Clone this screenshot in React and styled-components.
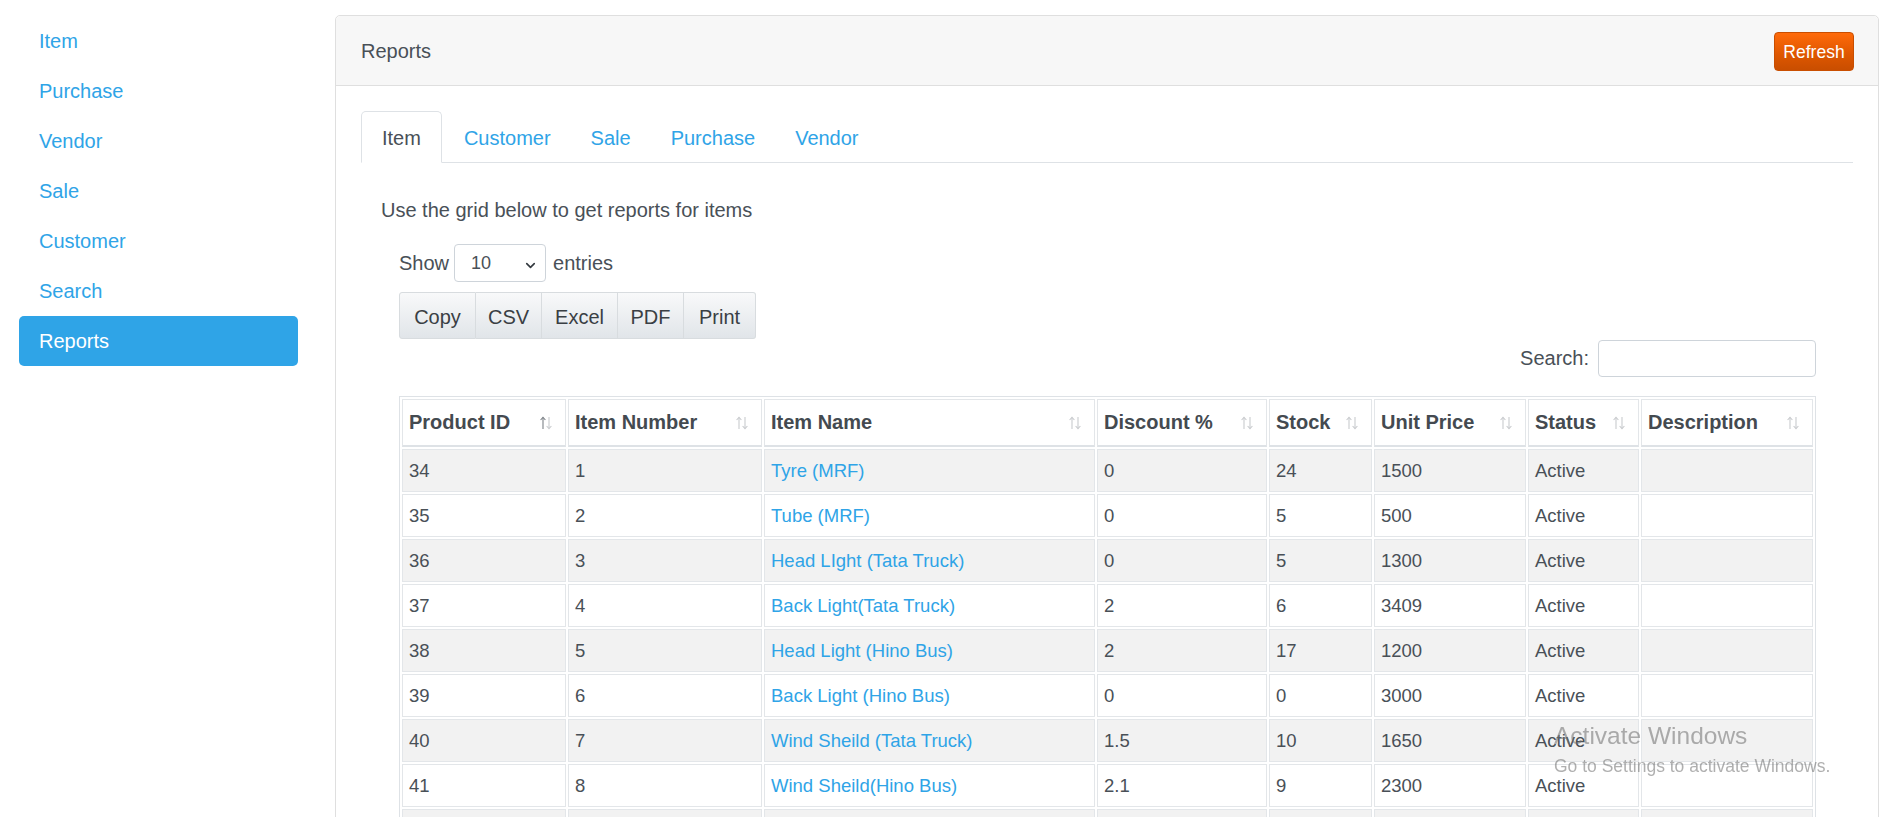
import React from 'react';
import styled, { createGlobalStyle } from 'styled-components';
import { ChevronDown } from 'lucide-react';

const GlobalStyle = createGlobalStyle`
* { box-sizing: border-box; }
body {
    margin: 0;
    background: #fff;
    font-family: "Liberation Sans", Arial, sans-serif;
    font-size: 20px;
    color: #495057;
}
`;

const sideLinks = ['Item', 'Purchase', 'Vendor', 'Sale', 'Customer', 'Search', 'Reports'];
const tabs = ['Item', 'Customer', 'Sale', 'Purchase', 'Vendor'];
const exportButtons = [
    { label: 'Copy', w: 77 },
    { label: 'CSV', w: 66 },
    { label: 'Excel', w: 76 },
    { label: 'PDF', w: 66 },
    { label: 'Print', w: 72 },
];
const columns = [
    { label: 'Product ID', w: 164, sorted: true },
    { label: 'Item Number', w: 194 },
    { label: 'Item Name', w: 331 },
    { label: 'Discount %', w: 170 },
    { label: 'Stock', w: 103 },
    { label: 'Unit Price', w: 152 },
    { label: 'Status', w: 111 },
    { label: 'Description' },
];
const rows = [
    [34, 1, 'Tyre (MRF)', '0', 24, 1500],
    [35, 2, 'Tube (MRF)', '0', 5, 500],
    [36, 3, 'Head LIght (Tata Truck)', '0', 5, 1300],
    [37, 4, 'Back Light(Tata Truck)', '2', 6, 3409],
    [38, 5, 'Head Light (Hino Bus)', '2', 17, 1200],
    [39, 6, 'Back Light (Hino Bus)', '0', 0, 3000],
    [40, 7, 'Wind Sheild (Tata Truck)', '1.5', 10, 1650],
    [41, 8, 'Wind Sheild(Hino Bus)', '2.1', 9, 2300],
    [42, 9, 'Side Mirror (Tata Truck)', '0', 12, 800],
    [43, 10, 'Side Mirror (Hino Bus)', '0', 8, 950],
];

function SortIcon({ active }) {
    return (
        <svg width="14" height="14" viewBox="0 0 14 14" fill="none" strokeWidth="1.1">
            <g stroke={active ? '#7d8288' : '#c9cbce'}>
                <path d="M4 13V1.5" />
                <path d="M1.6 4L4 1.4L6.4 4" />
            </g>
            <g stroke="#c9cbce">
                <path d="M10 1v11.5" />
                <path d="M7.6 10L10 12.6L12.4 10" />
            </g>
        </svg>
    );
}

function App() {
    return (
        <Page>
            <GlobalStyle />
            <Sidebar>
                {sideLinks.map((l) => (
                    <SideLink key={l} $active={l === 'Reports'}>{l}</SideLink>
                ))}
            </Sidebar>
            <Card>
                <CardHeader>
                    <HeaderTitle>Reports</HeaderTitle>
                    <RefreshButton>Refresh</RefreshButton>
                </CardHeader>
                <CardBody>
                    <TabNav>
                        {tabs.map((t) => (
                            <Tab key={t} $active={t === 'Item'}>{t}</Tab>
                        ))}
                    </TabNav>
                    <Intro>Use the grid below to get reports for items</Intro>
                    <GridWrapper>
                        <LengthRow>
                            Show
                            <SelectBox>
                                <Select defaultValue="10">
                                    <option>10</option>
                                    <option>25</option>
                                    <option>50</option>
                                    <option>100</option>
                                </Select>
                                <ChevronSlot><ChevronDown size={15} strokeWidth={2.6} /></ChevronSlot>
                            </SelectBox>
                            entries
                        </LengthRow>
                        <ButtonGroup>
                            {exportButtons.map((b) => (
                                <ExportButton key={b.label} $w={b.w}>{b.label}</ExportButton>
                            ))}
                        </ButtonGroup>
                        <SearchRow>
                            Search:
                            <SearchInput type="search" />
                        </SearchRow>
                        <Table>
                            <thead>
                                <tr>
                                    {columns.map((c) => (
                                        <Th key={c.label} $w={c.w}>
                                            <ThInner>
                                                {c.label}
                                                <SortIcon active={c.sorted} />
                                            </ThInner>
                                        </Th>
                                    ))}
                                </tr>
                            </thead>
                            <tbody>
                                {rows.map((r, i) => (
                                    <Row key={r[0]} $striped={i % 2 === 0}>
                                        <Td>{r[0]}</Td>
                                        <Td>{r[1]}</Td>
                                        <Td><ItemLink>{r[2]}</ItemLink></Td>
                                        <Td>{r[3]}</Td>
                                        <Td>{r[4]}</Td>
                                        <Td>{r[5]}</Td>
                                        <Td>Active</Td>
                                        <Td></Td>
                                    </Row>
                                ))}
                            </tbody>
                        </Table>
                    </GridWrapper>
                </CardBody>
            </Card>
            <Watermark>
                <WatermarkTitle>Activate Windows</WatermarkTitle>
                <WatermarkText>Go to Settings to activate Windows.</WatermarkText>
            </Watermark>
        </Page>
    );
}

export default App;

const Page = styled.div`
display: grid;
grid-template-columns: 335px 1fr;
align-items: start;
padding: 15px 10px 0 0;
`;

const Sidebar = styled.nav`
display: flex;
flex-direction: column;
padding: 1px 37px 0 19px;
`;

const SideLink = styled.a`
display: block;
padding: 10px 20px;
line-height: 30px;
font-size: 20px;
border-radius: 5px;
color: ${(p) => (p.$active ? '#fff' : '#2fa4e7')};
background: ${(p) => (p.$active ? '#2fa4e7' : 'transparent')};
cursor: pointer;
`;

const Card = styled.div`
border: 1px solid #dfdfdf;
border-radius: 5px;
background: #fff;
min-height: 900px;
`;

const CardHeader = styled.div`
display: flex;
justify-content: space-between;
align-items: center;
height: 70px;
padding: 1px 24px 0 25px;
background: #f7f7f7;
border-bottom: 1px solid #dfdfdf;
border-radius: 5px 5px 0 0;
`;

const HeaderTitle = styled.div`
font-size: 20px;
color: #495057;
`;

const RefreshButton = styled.button`
height: 39px;
width: 80px;
padding: 2px 0 0;
font-family: inherit;
font-size: 17.5px;
color: #fff;
border: 1px solid #c94e00;
border-radius: 4px;
background-image: linear-gradient(#ff6a0a, #dd5600 60%, #c94e00);
`;

const CardBody = styled.div`
padding: 25px 25px 25px 25px;
`;

const TabNav = styled.div`
display: flex;
border-bottom: 1px solid #dee2e6;
`;

const Tab = styled.a`
display: block;
padding: 11px ${(p) => (p.$active ? '20px' : '19px')} 9px;
line-height: 30px;
margin-bottom: -1px;
font-size: 20px;
border: 1px solid ${(p) => (p.$active ? '#dee2e6' : 'transparent')};
border-bottom-color: ${(p) => (p.$active ? '#fff' : 'transparent')};
border-radius: 5px 5px 0 0;
background: ${(p) => (p.$active ? '#fff' : 'transparent')};
color: ${(p) => (p.$active ? '#495057' : '#2fa4e7')};
margin-right: ${(p) => (p.$active ? '2px' : '0')};
`;

const Intro = styled.p`
margin: 32px 0 0 20px;
line-height: 30px;
font-size: 20px;
color: #495057;
`;

const GridWrapper = styled.div`
margin: 19px 37px 0 38px;
`;

const LengthRow = styled.div`
display: flex;
align-items: center;
gap: 5px;
height: 38px;
font-size: 20px;
color: #495057;
`;

const SelectBox = styled.div`
position: relative;
width: 92px;
height: 38px;
margin-right: 2px;
`;

const Select = styled.select`
appearance: none;
width: 100%;
height: 100%;
padding: 0 0 0 16px;
font-family: inherit;
font-size: 18px;
color: #495057;
background: #fff;
border: 1px solid #ced4da;
border-radius: 4px;
`;

const ChevronSlot = styled.span`
position: absolute;
right: 8px;
top: 11px;
color: #343a40;
pointer-events: none;
`;

const ButtonGroup = styled.div`
display: flex;
margin-top: 10px;
`;

const ExportButton = styled.button`
width: ${(p) => p.$w}px;
height: 47px;
padding: 3px 0 0;
font-family: inherit;
font-size: 20px;
color: #3a3f44;
border: 1px solid #d8dcdf;
border-left-width: 0;
background-image: linear-gradient(#f8f9fa, #e1e5e9);
&:first-child {
    border-left-width: 1px;
    border-radius: 3px 0 0 3px;
}
&:last-child {
    border-radius: 0 3px 3px 0;
}
`;

const SearchRow = styled.label`
display: flex;
justify-content: flex-end;
align-items: center;
gap: 9px;
margin-top: 1px;
font-size: 20px;
color: #495057;
`;

const SearchInput = styled.input`
width: 218px;
height: 37px;
border: 1px solid #ced4da;
border-radius: 4px;
background: #fff;
`;

const Table = styled.table`
width: 100%;
margin-top: 19px;
table-layout: fixed;
border-collapse: separate;
border-spacing: 2px;
border: 1px solid #dee2e6;
`;

const Th = styled.th`
width: ${(p) => (p.$w ? `${p.$w}px` : 'auto')};
padding: 11px 12px 11px 6px;
line-height: 23px;
font-size: 20px;
font-weight: bold;
text-align: left;
color: #444a50;
border: 1px solid #e3e6e9;
border-bottom: 2px solid #dee2e6;
`;

const ThInner = styled.div`
display: flex;
justify-content: space-between;
align-items: center;
white-space: nowrap;
`;

const Row = styled.tr`
background: ${(p) => (p.$striped ? '#f2f2f2' : '#fff')};
`;

const Td = styled.td`
padding: 10px 6px;
line-height: 21px;
font-size: 18.5px;
color: #495057;
border: 1px solid #e3e6e9;
white-space: nowrap;
overflow: hidden;
`;

const ItemLink = styled.a`
color: #2fa4e7;
cursor: pointer;
`;

const Watermark = styled.div`
position: fixed;
left: 1554px;
top: 721px;
pointer-events: none;
color: rgba(110, 110, 110, 0.55);
`;

const WatermarkTitle = styled.div`
font-size: 24.5px;
line-height: 30px;
`;

const WatermarkText = styled.div`
margin-top: 3px;
font-size: 17.5px;
line-height: 24px;
`;
